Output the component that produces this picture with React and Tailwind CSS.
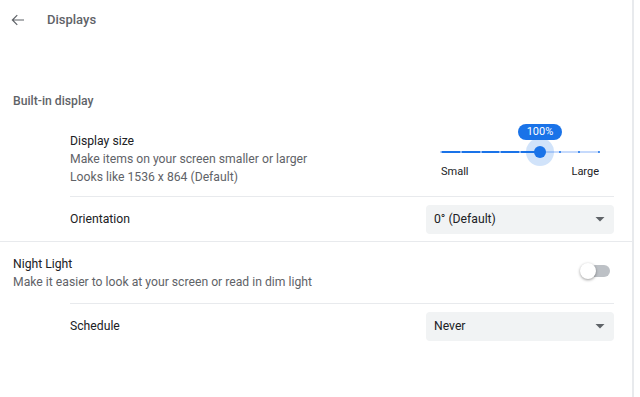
import React from "react";

function Dropdown({ value }) {
  return (
    <div className="flex h-[29px] w-[188px] items-center justify-between rounded-[4px] bg-[#f1f3f4] pl-[8px] pr-[9px] text-[12.2px] text-[#202124]">
      <span>{value}</span>
      <svg width="10" height="5" viewBox="0 0 10 5">
        <path d="M0.5 0 L9.5 0 L5 4.5 Z" fill="#5f6368" />
      </svg>
    </div>
  );
}

function Slider() {
  const ticks = Array.from({ length: 9 }, (_, i) => 15 + i * 19.75);
  return (
    <div className="relative h-[86px] w-[188px]">
      <div className="absolute left-[15px] top-[41px] h-[2px] w-[158px] bg-[#c6dafc]" />
      <div className="absolute left-[15px] top-[41px] h-[2px] w-[99px] bg-[#1a73e8]" />
      {ticks.map((x, i) => (
        <div
          key={i}
          className={i < 5 ? "absolute top-[41px] h-[2px] w-[2px] rounded-full bg-[#a8c7fa]" : "absolute top-[41px] h-[2px] w-[2px] rounded-full bg-[#1a73e8]"}
          style={{ left: x - 1 }}
        />
      ))}
      <div className="absolute left-[100px] top-[28px] h-[28px] w-[28px] rounded-full bg-[#1a73e8]/20" />
      <div className="absolute left-[108px] top-[36px] h-[12px] w-[12px] rounded-full bg-[#1a73e8]" />
      <div className="absolute left-[92px] top-[14px] flex h-[16px] w-[44px] items-center justify-center rounded-full bg-[#1a73e8] text-[11px] text-white">
        100%
      </div>
      <div className="absolute left-[15px] right-[15px] top-[53px] flex justify-between text-[11px] leading-[18px] text-[#202124]">
        <span>Small</span>
        <span>Large</span>
      </div>
    </div>
  );
}

export default function App() {
  return (
    <div
      className="h-[397px] w-[640px] bg-white"
      style={{ fontFamily: "Roboto, 'Liberation Sans', sans-serif" }}
    >
      <div className="h-[397px] w-[634px] border-r-2 border-[#e8eaed]">
        <div className="flex h-10 items-center">
          <svg className="ml-[9px]" width="18" height="18" viewBox="0 0 24 24">
            <path d="M20 12H5 M11 5.5l-6.5 6.5 6.5 6.5" fill="none" stroke="#5f6368" strokeWidth="1.6" />
          </svg>
          <span className="ml-[20px] text-[13px] font-medium text-[#5f6368]">Displays</span>
        </div>

        <div className="mt-[52px] pl-[13px] text-[12.2px] font-medium leading-[18px] text-[#5f6368]">
          Built-in display
        </div>

        <div className="border-b border-[#e8eaed]">
          <div className="ml-[70px] mr-[18px]">
            <div className="flex items-start justify-between border-b border-[#e8eaed]">
              <div className="pt-[22px] pb-[10px] text-[12.2px] leading-[18px]">
                <div className="text-[#202124]">Display size</div>
                <div className="text-[#5f6368]">Make items on your screen smaller or larger</div>
                <div className="text-[#5f6368]">Looks like 1536 x 864 (Default)</div>
              </div>
              <Slider />
            </div>
            <div className="flex h-[44px] items-center justify-between">
              <span className="text-[12.2px] text-[#202124]">Orientation</span>
              <Dropdown value="0° (Default)" />
            </div>
          </div>
        </div>

        <div className="flex items-center justify-between pt-[13px] pb-[12px] pl-[13px] pr-[22px] text-[12.2px] leading-[18px]">
          <div>
            <div className="text-[#202124]">Night Light</div>
            <div className="text-[#5f6368]">Make it easier to look at your screen or read in dim light</div>
          </div>
          <div className="relative mt-[-4px] h-[16px] w-[30px]">
            <div className="absolute left-[4px] top-[2px] h-[12px] w-[26px] rounded-full bg-[#bdc1c6]" />
            <div className="absolute left-0 top-0 h-[16px] w-[16px] rounded-full bg-white shadow-[0_1px_3px_rgba(0,0,0,0.4)]" />
          </div>
        </div>

        <div className="ml-[70px] mr-[18px] border-t border-[#e8eaed]">
          <div className="flex h-[44px] items-center justify-between">
            <span className="text-[12.2px] text-[#202124]">Schedule</span>
            <Dropdown value="Never" />
          </div>
        </div>
      </div>
    </div>
  );
}
